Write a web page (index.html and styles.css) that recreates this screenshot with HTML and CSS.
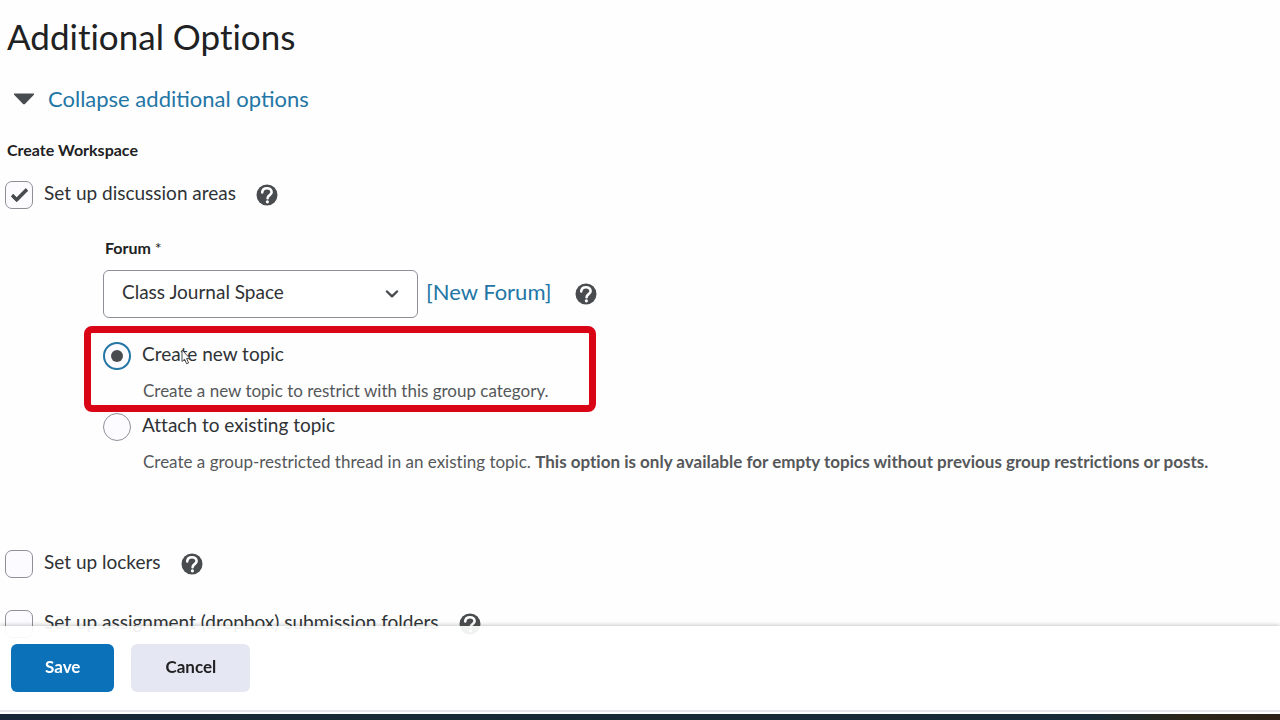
FILE: index.html
```
<!DOCTYPE html>
<html lang="en">
<head>
    <meta charset="UTF-8">
    <meta name="viewport" content="width=device-width, initial-scale=1.0">
    <title>Additional Options</title>
    <link rel="stylesheet" href="styles.css">
</head>
<body>

    <!-- Shared icons -->
    <svg class="sprite" aria-hidden="true">
        <symbol id="icon-help" viewBox="0 0 22 22">
            <circle cx="11" cy="11" r="10.5" fill="#494c4e"/>
            <path d="M6.200 8.400C6.400 5.600 8.400 4.200 11 4.200S15.600 5.800 15.600 8.200C15.600 11.200 11.600 11 11.600 14.200" fill="none" stroke="#fff" stroke-width="2.600" stroke-linecap="round"/>
            <circle cx="11.400" cy="17.800" r="1.600" fill="#fff"/>
        </symbol>
    </svg>

    <main class="content">
        <h1>Additional Options</h1>

        <div class="collapse">
            <svg class="collapse-arrow" viewBox="0 0 22 12" aria-hidden="true"><path d="M1.500 0.500h19q1.200 0.200 0.400 1.200l-8.700 9q-1.200 1-2.400 0l-8.700-9q-0.800-1 0.400-1.200z" fill="#494c4e"/></svg>
            <a href="#">Collapse additional options</a>
        </div>

        <h2>Create Workspace</h2>

        <div class="row">
            <input type="checkbox" id="discussion" checked>
            <label for="discussion">Set up discussion areas</label>
            <button type="button" class="help" aria-label="Help"><svg><use href="#icon-help"/></svg></button>
        </div>

        <div class="forum">
            <label class="field-label" for="forum">Forum <span class="required">*</span></label>
            <div class="forum-picker">
                <div class="select-wrap">
                    <select id="forum">
                        <option>Class Journal Space</option>
                    </select>
                    <svg class="chevron" viewBox="0 0 14 8" aria-hidden="true"><path d="M2 1.500L7 6.300l5-4.800" fill="none" stroke="#494c4e" stroke-width="2.400" stroke-linecap="round" stroke-linejoin="round"/></svg>
                </div>
                <a href="#">[New Forum]</a>
                <button type="button" class="help" aria-label="Help"><svg><use href="#icon-help"/></svg></button>
            </div>

            <div class="topic highlighted">
                <div class="row">
                    <input type="radio" name="topic" id="topic-new" checked>
                    <label for="topic-new">Create new topic</label>
                </div>
                <p>Create a new topic to restrict with this group category.</p>
                <svg class="pointer" viewBox="0 0 10 16" aria-hidden="true"><path d="M1 1v11.500l2.600-2.300 2 4.600 2-0.900-2-4.400h3.400z" fill="#fff" stroke="#494c4e" stroke-width="1"/></svg>
            </div>

            <div class="topic">
                <div class="row">
                    <input type="radio" name="topic" id="topic-existing">
                    <label for="topic-existing">Attach to existing topic</label>
                </div>
                <p>Create a group-restricted thread in an existing topic. <strong>This option is only available for empty topics without previous group restrictions or posts.</strong></p>
            </div>
        </div>

        <div class="row lockers">
            <input type="checkbox" id="lockers">
            <label for="lockers">Set up lockers</label>
            <button type="button" class="help" aria-label="Help"><svg><use href="#icon-help"/></svg></button>
        </div>

        <div class="row assignments">
            <input type="checkbox" id="assignments">
            <label for="assignments">Set up assignment (dropbox) submission folders</label>
            <button type="button" class="help" aria-label="Help"><svg><use href="#icon-help"/></svg></button>
        </div>
    </main>

    <footer class="bottom">
        <div class="actions">
            <button type="button" class="btn primary">Save</button>
            <button type="button" class="btn">Cancel</button>
        </div>
        <div class="taskbar"></div>
    </footer>

</body>
</html>
```
FILE: styles.css
```
*,
*::before,
*::after {
    box-sizing: border-box;
}

body {
    margin: 0;
    font-family: Lato, sans-serif;
    font-size: 19px;
    line-height: 24px;
    color: #2f3235;
    background: #fefefe;
    font-variant-ligatures: none;
}

.sprite {
    position: absolute;
    width: 0;
    height: 0;
}

.content {
    padding: 12px 5px 0;
}

h1 {
    margin: 0 2px;
    font-size: 35px;
    font-weight: 400;
    line-height: 48px;
    color: #202122;
}

h2 {
    margin: 25px 2px 19px;
    font-size: 16px;
    font-weight: 700;
    line-height: 24px;
    color: #202122;
}

a {
    color: #2376a5;
    font-size: 22px;
    text-decoration: none;
}

a:hover {
    text-decoration: underline;
}

/* Collapse toggle */
.collapse {
    display: flex;
    align-items: center;
    gap: 13px;
    margin-top: 24px;
    padding-left: 8px;
    line-height: 29px;
    font-variant-ligatures: normal;
}

.collapse-arrow {
    width: 22px;
    height: 12px;
}

/* Checkbox and radio rows */
.row {
    display: flex;
    align-items: flex-start;
    gap: 11px;
}

input {
    flex: none;
    display: grid;
    place-items: center;
    appearance: none;
    width: 28px;
    height: 28px;
    margin: 0;
    border: 1px solid #8e8f98;
    border-radius: 7px;
    background: #fcfbff;
}

input[type="checkbox"]:checked::before {
    content: "";
    width: 17px;
    height: 9px;
    border: solid #494c4e;
    border-width: 0 0 4px 4px;
    border-radius: 2px;
    transform: translateY(-2px) rotate(-45deg);
}

input[type="radio"] {
    border-radius: 50%;
}

input[type="radio"]:checked {
    border: 2px solid #2376a5;
}

input[type="radio"]:checked::before {
    content: "";
    width: 12px;
    height: 12px;
    border-radius: 50%;
    background: #494c4e;
}

.help {
    width: 22px;
    height: 22px;
    margin: 3px 0 0 9px;
    padding: 0;
    border: none;
    background: none;
    cursor: pointer;
}

.help svg {
    display: block;
    width: 22px;
    height: 22px;
}

/* Forum settings */
.forum {
    margin: 27px 0 0 98px;
}

.field-label {
    display: block;
    margin: 0 2px 10px;
    font-size: 16px;
    font-weight: 700;
    color: #202122;
}

.required {
    font-weight: 400;
}

.forum-picker {
    display: flex;
    align-items: center;
    gap: 8px;
    margin-bottom: 24px;
}

.forum-picker a {
    padding-bottom: 4px;
}

.forum-picker .help {
    margin: 0 0 0 15px;
}

.select-wrap {
    position: relative;
}

select {
    display: block;
    appearance: none;
    width: 315px;
    height: 48px;
    padding: 0 40px 4px 18px;
    border: 1px solid #8e8f98;
    border-radius: 6px;
    background: #fff;
    color: #2f3235;
    font: inherit;
}

.chevron {
    position: absolute;
    right: 19px;
    top: 20px;
    width: 14px;
    height: 8px;
    pointer-events: none;
}

.topic {
    position: relative;
    margin-bottom: 10px;
}

.topic p {
    margin: 9px 0 0 40px;
    font-size: 17px;
    color: #55585a;
}

.highlighted::after {
    content: "";
    position: absolute;
    top: -16px;
    left: -19px;
    width: 512px;
    height: 86px;
    border: 7px solid #d90416;
    border-radius: 8px;
    pointer-events: none;
}

.pointer {
    position: absolute;
    top: 7px;
    left: 78px;
    width: 10px;
    height: 16px;
}

.lockers {
    margin-top: 76px;
}

.assignments {
    margin-top: 32px;
}

/* Floating action bar */
.bottom {
    position: fixed;
    left: 0;
    right: 0;
    bottom: 0;
    background: rgba(255, 255, 255, 0.92);
    box-shadow: 0 -1px 4px rgba(73, 76, 78, 0.3);
}

.actions {
    display: flex;
    gap: 17px;
    padding: 18px 11px;
    border-bottom: 2px solid #e6e6ea;
}

.btn {
    height: 48px;
    padding: 0 34px 4px;
    border: none;
    border-radius: 6px;
    background: #e5e8f2;
    color: #202122;
    font: 700 17px Lato, sans-serif;
    cursor: pointer;
}

.primary {
    background: #0b72ba;
    color: #fff;
}

.taskbar {
    height: 8px;
    border-top: 2px solid #fff;
    background: linear-gradient(to right, #172638, #172a35 20%, #152b37 85%, #2b2619 92%, #2e2117);
}
```
